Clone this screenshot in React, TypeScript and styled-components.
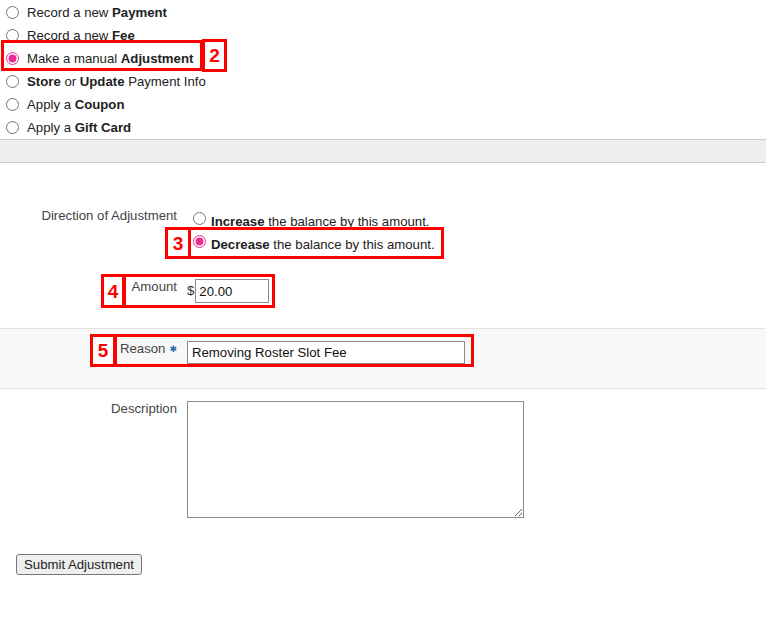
import React from "react";
import styled, { createGlobalStyle } from "styled-components";

const GlobalStyle = createGlobalStyle`
  html, body { margin: 0; padding: 0; background: #fff; }
  body {
    font-family: "Liberation Sans", Arial, Helvetica, sans-serif;
    font-size: 13.2px;
    color: #333;
  }
  * { box-sizing: border-box; }
`;

const Page = styled.div`
  position: relative;
  width: 766px;
  height: 624px;
  overflow: hidden;
`;

const ActionList = styled.div`
  display: flex;
  flex-direction: column;
  padding-top: 1px;
`;

const ActionRow = styled.label`
  display: flex;
  align-items: center;
  height: 23px;
  line-height: 16px;
  color: #222;
  white-space: nowrap;
`;

const Radio = styled.input.attrs({ type: "radio" })<{ $inline?: boolean }>`
  flex: none;
  width: 13px;
  height: 13px;
  margin: ${(p) => (p.$inline ? "2px 5px 0 6px" : "0 8px 0 6px")};
  accent-color: #ec2d8f;
`;

const Band = styled.div`
  height: 24px;
  background: #eeeeee;
  border-top: 1px solid #cccccc;
  border-bottom: 1px solid #cccccc;
`;

const FormSection = styled.div`
  padding-top: 45px;
`;

const FieldRow = styled.div<{ $gapTop?: number }>`
  display: grid;
  grid-template-columns: 177px 1fr;
  column-gap: 10px;
  align-items: start;
  margin-top: ${(p) => p.$gapTop ?? 0}px;
`;

const FieldLabel = styled.div`
  text-align: right;
  line-height: 16px;
  color: #444;
  white-space: nowrap;
`;

const Required = styled.span`
  font-family: "DejaVu Sans", sans-serif;
  font-size: 9px;
  color: #1f6bb0;
  margin-left: 4px;
  vertical-align: 1px;
`;

const Options = styled.div`
  display: flex;
  flex-direction: column;
  padding-top: 2px;
`;

const OptionRow = styled.label`
  display: flex;
  align-items: flex-start;
  height: 23px;
  line-height: 23px;
  color: #222;
  white-space: nowrap;
`;

const AmountField = styled.div`
  display: flex;
  align-items: center;
  color: #333;
`;

const Currency = styled.span`
  line-height: 16px;
  margin-right: 1px;
`;

const TextInput = styled.input<{ $w: number; $h: number; $pad?: number }>`
  width: ${(p) => p.$w}px;
  height: ${(p) => p.$h}px;
  padding: 0 ${(p) => p.$pad ?? 4}px;
  border: 1px solid #8c8c8c;
  border-radius: 0;
  font: inherit;
  color: #111;
  background: #fff;
  outline: none;
`;

const ShadedBand = styled.div`
  margin-top: 25px;
  padding: 12px 0 24px;
  background: #f8f8f8;
  border-top: 1px solid #e3e3e3;
  border-bottom: 1px solid #e3e3e3;
`;

const TextArea = styled.textarea`
  display: block;
  width: 337px;
  height: 117px;
  border: 1px solid #8c8c8c;
  border-radius: 0;
  font: inherit;
  padding: 2px 4px;
  background: #fff;
`;

const SubmitButton = styled.button`
  display: block;
  margin: 36px 0 0 16px;
  height: 21px;
  padding: 0 7px;
  font: inherit;
  color: #222;
  background: #efefef;
  border: 1px solid #767676;
  border-radius: 3px;
`;

const Callout = styled.div<{ $x: number; $y: number; $w: number; $h: number }>`
  position: absolute;
  left: ${(p) => p.$x}px;
  top: ${(p) => p.$y}px;
  width: ${(p) => p.$w}px;
  height: ${(p) => p.$h}px;
  border: 3px solid #ff0000;
  pointer-events: none;
`;

const CalloutNumber = styled(Callout)`
  display: flex;
  align-items: center;
  justify-content: center;
  background: #fff;
  color: #ff0000;
  font-family: "Liberation Sans", Arial, sans-serif;
  font-weight: bold;
  font-size: 19px;
  line-height: 1;
`;

type Action = {
  pre?: string;
  bold: string;
  mid?: string;
  bold2?: string;
  post?: string;
  checked?: boolean;
};

const actions: Action[] = [
  { pre: "Record a new ", bold: "Payment" },
  { pre: "Record a new ", bold: "Fee" },
  { pre: "Make a manual ", bold: "Adjustment", checked: true },
  { bold: "Store", mid: " or ", bold2: "Update", post: " Payment Info" },
  { pre: "Apply a ", bold: "Coupon" },
  { pre: "Apply a ", bold: "Gift Card" },
];

export default function App() {
  return (
    <Page>
      <GlobalStyle />
      <ActionList>
        {actions.map((a, i) => (
          <ActionRow key={i}>
            <Radio name="action" defaultChecked={a.checked} />
            <span>
              {a.pre}
              <b>{a.bold}</b>
              {a.mid}
              {a.bold2 && <b>{a.bold2}</b>}
              {a.post}
            </span>
          </ActionRow>
        ))}
      </ActionList>
      <Band />
      <FormSection>
        <FieldRow>
          <FieldLabel>Direction of Adjustment</FieldLabel>
          <Options>
            <OptionRow>
              <Radio $inline name="direction" />
              <span>
                <b>Increase</b> the balance by this amount.
              </span>
            </OptionRow>
            <OptionRow>
              <Radio $inline name="direction" defaultChecked />
              <span>
                <b>Decrease</b> the balance by this amount.
              </span>
            </OptionRow>
          </Options>
        </FieldRow>
        <FieldRow $gapTop={23}>
          <FieldLabel>Amount</FieldLabel>
          <AmountField>
            <Currency>$</Currency>
            <TextInput $w={74} $h={24} $pad={3} defaultValue="20.00" />
          </AmountField>
        </FieldRow>
        <ShadedBand>
          <FieldRow>
            <FieldLabel>
              Reason<Required>✱</Required>
            </FieldLabel>
            <div>
              <TextInput $w={278} $h={23} defaultValue="Removing Roster Slot Fee" />
            </div>
          </FieldRow>
        </ShadedBand>
        <FieldRow $gapTop={12}>
          <FieldLabel>Description</FieldLabel>
          <div>
            <TextArea />
          </div>
        </FieldRow>
        <SubmitButton>Submit Adjustment</SubmitButton>
      </FormSection>

      <Callout $x={1} $y={40} $w={202} $h={31} />
      <CalloutNumber $x={202} $y={39} $w={25} $h={33}>2</CalloutNumber>
      <Callout $x={188} $y={227} $w={256} $h={32} />
      <CalloutNumber $x={165} $y={227} $w={26} $h={32}>3</CalloutNumber>
      <Callout $x={123} $y={274} $w={152} $h={34} />
      <CalloutNumber $x={101} $y={274} $w={24} $h={34}>4</CalloutNumber>
      <Callout $x={114} $y={334} $w={360} $h={33} />
      <CalloutNumber $x={90} $y={334} $w={26} $h={33}>5</CalloutNumber>
    </Page>
  );
}
